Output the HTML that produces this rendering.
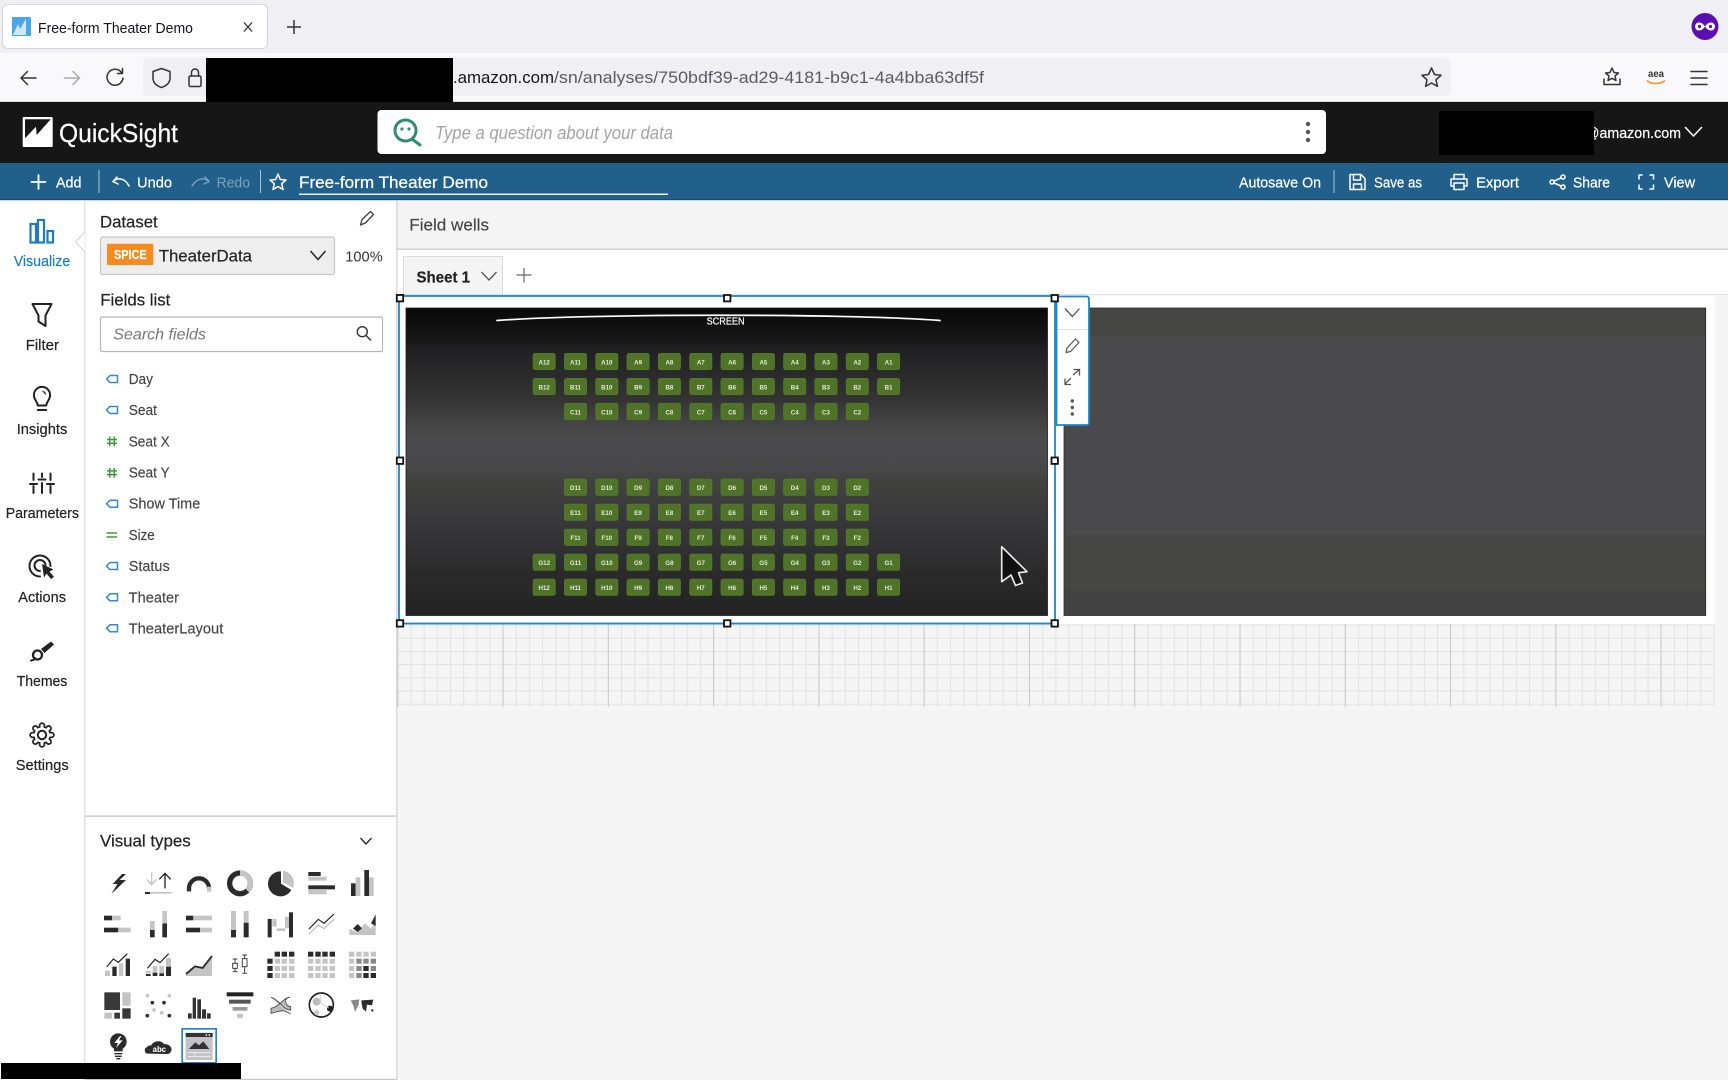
<!DOCTYPE html>
<html><head><meta charset="utf-8"><title>Free-form Theater Demo</title>
<style>
html,body{margin:0;padding:0;background:#f5f5f5;width:1728px;height:1080px;overflow:hidden}
svg{display:block;font-family:"Liberation Sans",sans-serif}
text[fill="#fff"]{stroke:#fff;stroke-width:.22}
text[fill="#222"]{stroke:#222;stroke-width:.2}
.fl text{stroke:#444;stroke-width:.15}
.s{width:22.4px;height:16.5px;fill:#4f7428;stroke:#5a802f;stroke-width:.5}
.l{font-size:6.2px;fill:#e4ead6;text-anchor:middle;font-weight:bold}
.w{fill:none;stroke:#fff;stroke-width:1.5;stroke-linecap:round;stroke-linejoin:round}
.k{fill:none;stroke:#222;stroke-width:2;stroke-linecap:round;stroke-linejoin:round}
.b{fill:none;stroke:#444;stroke-width:1.4;stroke-linecap:round;stroke-linejoin:round}
.t{fill:none;stroke:#2f8ad2;stroke-width:1.5;stroke-linejoin:round}
.n{fill:none;stroke:#3a9a3a;stroke-width:1.5}
.h{fill:#fff;stroke:#111;stroke-width:1.8}
.d{fill:#2b2b2b}.g{fill:#c4c4c4}.m{fill:#888}
.q{width:16px;height:15px}
</style></head><body>
<svg width="1728" height="1080" viewBox="0 0 1728 1080" xmlns="http://www.w3.org/2000/svg">
<defs>
<pattern id="gm" x="397.3" y="624.5" width="13.16" height="13.2" patternUnits="userSpaceOnUse"><path d="M.6 0V13.2M0 .6H13.16" stroke="#e3e3e5" stroke-width="1.1" fill="none"/></pattern>
<linearGradient id="th" x1="0" y1="0" x2="0" y2="1"><stop offset="0" stop-color="#090909"/><stop offset=".1" stop-color="#161616"/><stop offset=".136" stop-color="#202022"/><stop offset=".3" stop-color="#343434"/><stop offset=".386" stop-color="#464646"/><stop offset=".43" stop-color="#4b4b4d"/><stop offset=".526" stop-color="#474749"/><stop offset=".558" stop-color="#424240"/><stop offset=".688" stop-color="#38383a"/><stop offset=".883" stop-color="#29292a"/><stop offset="1" stop-color="#232324"/></linearGradient>
</defs>

<!-- browser chrome -->
<rect width="1728" height="53" fill="#f0f0f4"/>
<rect x="2.5" y="4.5" width="265" height="44" rx="5" fill="#fff" stroke="#d4d4d8"/>
<rect x="12" y="17" width="19" height="19" rx="1" fill="#4aa6e8"/>
<path d="M13 35L18 24L20 29L26 19V35Z" fill="#cfe8fb"/>
<text x="38" y="33" font-size="14.5" fill="#15141a" textLength="155" lengthAdjust="spacingAndGlyphs">Free-form Theater Demo</text>
<path d="M244 22.5L252 31.5M252 22.5L244 31.5" stroke="#333" stroke-width="1.3" fill="none"/>
<path d="M294 20V34M287 27H301" stroke="#333" stroke-width="1.5" fill="none"/>
<circle cx="1705" cy="26.5" r="13.5" fill="#5b0fb0"/>
<path d="M1705 26.5c-2-3-4-4-6-4a4 4 0 0 0 0 8c2 0 4-1 6-4c2 3 4 4 6 4a4 4 0 0 0 0-8c-2 0-4 1-6 4Z" fill="#fff"/>
<circle cx="1699.5" cy="26.5" r="1.6" fill="#5b0fb0"/><circle cx="1710.5" cy="26.5" r="1.6" fill="#5b0fb0"/>

<rect y="53" width="1728" height="49" fill="#f9f9fb"/>
<rect y="101" width="1728" height="1" fill="#ddd"/>
<rect x="143" y="58" width="1308" height="38" rx="5" fill="#f0f0f4"/>
<g fill="none" stroke="#333" stroke-width="1.5" stroke-linecap="round" stroke-linejoin="round">
<path d="M36 78H21M27.5 71.5L21 78L27.5 84.5"/>
<path d="M64.5 78H79.5M73 71.5L79.5 78L73 84.5" stroke="#aaa"/>
<path d="M121.5 72.5A8 8 0 1 0 123 78M122.5 68.5V73.5H117.5"/>
<path d="M161.5 68.5L170 71.5V78C170 83 166 86 161.5 87.5C157 86 153 83 153 78V71.5Z"/>
<rect x="189" y="76" width="12" height="10.5" rx="1.5"/><path d="M191.5 76V72.5A3.5 3.5 0 0 1 198.5 72.5V76"/>
<path d="M1431.5 68L1434.5 74.5L1441 75.3L1436 79.8L1437.4 86.3L1431.5 83L1425.6 86.3L1427 79.8L1422 75.3L1428.5 74.5Z"/>
<path d="M1612 68L1614 72.5L1618.5 73L1615 76L1616 80.5L1612 78.3L1608 80.5L1609 76L1605.5 73L1610 72.5ZM1604 79V84.5H1620V79"/>
<path d="M1691 71.5H1707M1691 78H1707M1691 84.5H1707"/>
</g>
<text x="1656" y="77" font-size="10" font-weight="bold" fill="#333" text-anchor="middle" textLength="16" lengthAdjust="spacingAndGlyphs">aea</text>
<path d="M1647 80.5C1651 84.5 1660 84.5 1665 80.5" stroke="#f09a28" stroke-width="1.6" fill="none"/>
<text x="453" y="83" font-size="16.5" fill="#15141a" textLength="101" lengthAdjust="spacingAndGlyphs">.amazon.com</text>
<text x="554" y="83" font-size="16.5" fill="#5b5b66" textLength="430" lengthAdjust="spacingAndGlyphs">/sn/analyses/750bdf39-ad29-4181-b9c1-4a4bba63df5f</text>
<rect x="206" y="58" width="247" height="44" fill="#000"/>

<!-- QuickSight header -->
<rect y="102" width="1728" height="61" fill="#161616"/>
<rect x="22.7" y="117" width="30" height="30" rx="1" fill="#fff"/>
<path d="M25 119.3H50.7L36.7 135L36 126.700L25 138.300Z" fill="#161616"/>
<text x="59" y="142" font-size="26" fill="#fff" textLength="119" lengthAdjust="spacingAndGlyphs">QuickSight</text>
<rect x="377.5" y="110" width="948.5" height="44" rx="4" fill="#fff"/>
<circle cx="405.5" cy="130.5" r="10.5" fill="none" stroke="#2e8b74" stroke-width="3"/>
<path d="M412 139L420 145" stroke="#2e8b74" stroke-width="3" stroke-linecap="round"/>
<circle cx="402" cy="129" r="1.6" fill="#2e8b74"/><circle cx="409" cy="129" r="1.6" fill="#2e8b74"/>
<text x="435" y="139" font-size="18" font-style="italic" fill="#a4a4a4" textLength="238" lengthAdjust="spacingAndGlyphs">Type a question about your data</text>
<circle cx="1308" cy="124" r="2.2" fill="#555"/><circle cx="1308" cy="132" r="2.2" fill="#555"/><circle cx="1308" cy="140" r="2.2" fill="#555"/>
<text x="1585" y="138" font-size="15" fill="#fff" textLength="96" lengthAdjust="spacingAndGlyphs">@amazon.com</text>
<rect x="1439" y="111" width="155" height="44" fill="#000"/>
<path d="M1685.500 127.500L1693.500 136L1701.500 127.500" class="w"/>

<!-- blue action bar -->
<rect y="163" width="1728" height="37" fill="#22608c"/>
<rect y="199" width="1728" height="1" fill="#134e78"/>
<rect y="200" width="1728" height="1" fill="#c8d6e4"/>
<path d="M38.500 175V189M31.500 182H45.500" class="w" style="stroke-width:1.800"/>
<text x="56" y="187.500" font-size="15" fill="#fff" textLength="25.500" lengthAdjust="spacingAndGlyphs">Add</text>
<rect x="98.500" y="170" width="1" height="23" fill="#a8c0d2"/>
<path d="M113 181.500L117 177M113 181.500L118 184M113.500 181C118 177.500 125 178 129 186" class="w"/>
<text x="137" y="187.500" font-size="15" fill="#fff" textLength="35" lengthAdjust="spacingAndGlyphs">Undo</text>
<path d="M209 181.500L205 177M209 181.500L204 184M208.500 181C204 177.500 197 178 192 186" fill="none" stroke="#7d9fb8" stroke-width="1.500" stroke-linecap="round"/>
<text x="216.500" y="187.500" font-size="15" fill="#7d9fb8" textLength="33.500" lengthAdjust="spacingAndGlyphs">Redo</text>
<rect x="260" y="170" width="1" height="23" fill="#a8c0d2"/>
<path d="M278 174L280.300 179.500L286 180L281.700 183.700L283 189.500L278 186.500L273 189.500L274.300 183.700L270 180L275.700 179.500Z" class="w"/>
<text x="299" y="188" font-size="16.500" fill="#fff" textLength="189" lengthAdjust="spacingAndGlyphs">Free-form Theater Demo</text>
<rect x="299" y="193.500" width="369" height="1.500" fill="#e8eff5"/>
<text x="1239" y="187.500" font-size="15" fill="#fff" textLength="82" lengthAdjust="spacingAndGlyphs">Autosave On</text>
<rect x="1333.500" y="170" width="1" height="23" fill="#a8c0d2"/>
<path d="M1350 174.500H1361L1365 178.500V189.500H1350ZM1353.500 174.500V180H1360.500V174.500M1353.500 189.500V184H1361.500V189.500" class="w"/>
<text x="1374" y="187.500" font-size="15" fill="#fff" textLength="48" lengthAdjust="spacingAndGlyphs">Save as</text>
<path d="M1454 179V174.500H1464V179M1454 186H1451V179H1467V186H1464M1454 183H1464V189.500H1454Z" class="w"/>
<text x="1476" y="187.500" font-size="15" fill="#fff" textLength="43" lengthAdjust="spacingAndGlyphs">Export</text>
<circle cx="1563" cy="177" r="2" class="w"/><circle cx="1563" cy="187" r="2" class="w"/><circle cx="1552" cy="182" r="2" class="w"/><path d="M1554 181L1561 178M1554 183L1561 186" class="w"/>
<text x="1573" y="187.500" font-size="15" fill="#fff" textLength="37" lengthAdjust="spacingAndGlyphs">Share</text>
<path d="M1642 175H1639V179M1650 175H1653.500V179M1639 185V189H1642M1653.500 185V189H1650" class="w"/>
<text x="1664" y="187.500" font-size="15" fill="#fff" textLength="31" lengthAdjust="spacingAndGlyphs">View</text>

<!-- main backgrounds -->
<rect x="0" y="201" width="396" height="879" fill="#fff"/>
<rect x="84.300" y="201" width="1" height="879" fill="#d2d2d2"/>
<rect x="396.300" y="201" width="1.200" height="879" fill="#d2d2d2"/>
<rect x="397.500" y="201" width="1331" height="48" fill="#f4f4f4"/>
<rect x="397.500" y="248.500" width="1331" height="1.500" fill="#cfcfcf"/>
<rect x="397.500" y="250" width="1331" height="45" fill="#fff"/>
<rect x="397.500" y="294" width="1331" height="1" fill="#e0e0e0"/>
<rect x="85.300" y="815.500" width="311" height="1.200" fill="#bdbdbd"/>
<rect x="85.300" y="1078.800" width="312" height="1.200" fill="#c8c8c8"/>

<!-- left nav -->
<path d="M84.800 232L75.500 241.800L84.800 252" fill="#fff" stroke="#d2d2d2"/>
<g fill="none" stroke="#1b7dc2" stroke-width="2.200">
<rect x="30.500" y="224" width="5.500" height="18.500"/><rect x="38" y="220" width="6" height="22.500"/><rect x="47.500" y="231" width="5.500" height="11.500"/>
</g>
<text x="13.700" y="266" font-size="15" fill="#1b7dc2" stroke="#1b7dc2" stroke-width=".2" textLength="56.600" lengthAdjust="spacingAndGlyphs">Visualize</text>
<path d="M32.500 304H51.500L45.500 315.500V326L38.500 321.500V315.500Z" class="k"/>
<text x="25.700" y="350" font-size="15" fill="#222" textLength="33.300" lengthAdjust="spacingAndGlyphs">Filter</text>
<path d="M37.800 405.500C37.500 401.500 33.900 400 33.900 395A8.100 8.100 0 0 1 50.100 395C50.100 400 46.500 401.500 46.200 405.500Z" class="k"/>
<path d="M37.800 410H46.200" class="k"/><path d="M42.500 391.500A3.500 3.500 0 0 1 45.500 394.500" fill="none" stroke="#222" stroke-width="1.200"/>
<text x="16.700" y="434" font-size="15" fill="#222" textLength="50.600" lengthAdjust="spacingAndGlyphs">Insights</text>
<path d="M33.500 473.500V480M33.500 486V493M42 473.500V477M42 483V493M50.500 473.500V480M50.500 486V493" class="k"/>
<path d="M30 484H37M38.500 479.500H45.500M47 484H54" class="k"/>
<text x="5.700" y="518" font-size="15" fill="#222" textLength="73.300" lengthAdjust="spacingAndGlyphs">Parameters</text>
<path d="M40 576.500A10.500 10.500 0 1 1 50.500 566" class="k"/>
<path d="M40 571A5.500 5.500 0 1 1 45.500 565.500" class="k"/>
<path d="M42 564L53.500 569.500L49.500 571.500L54 577L51 579L46.500 573.500L44 577.500Z" fill="#222"/>
<text x="18.300" y="602" font-size="15" fill="#222" textLength="47.700" lengthAdjust="spacingAndGlyphs">Actions</text>
<path d="M41 649L51 641.500L54 644.500L44.500 653Z" fill="#222"/>
<circle cx="37.500" cy="655" r="4.500" fill="none" stroke="#222" stroke-width="2.300"/>
<path d="M31 660.500C34 660 35 659 35 658" class="k"/>
<text x="16.700" y="686" font-size="15" fill="#222" textLength="50.600" lengthAdjust="spacingAndGlyphs">Themes</text>
<g transform="translate(42 735)">
<g stroke="#222" stroke-width="6.500" stroke-linecap="round"><path d="M-9.500 0H9.500M0 -9.500V9.500M-6.700 -6.700L6.700 6.700M-6.700 6.700L6.700 -6.700"/></g>
<circle r="9" fill="#222"/>
<g stroke="#fff" stroke-width="3" stroke-linecap="round"><path d="M-9.500 0H9.500M0 -9.500V9.500M-6.700 -6.700L6.700 6.700M-6.700 6.700L6.700 -6.700"/></g>
<circle r="7.500" fill="#fff"/><circle r="4.200" fill="#fff" stroke="#222" stroke-width="2"/>
</g>
<text x="15.700" y="770" font-size="15" fill="#222" textLength="53" lengthAdjust="spacingAndGlyphs">Settings</text>

<!-- dataset panel -->
<text x="100" y="227.500" font-size="16.500" fill="#222" textLength="57.700" lengthAdjust="spacingAndGlyphs">Dataset</text>
<path d="M360.500 225L362 219.500L370.500 211.500L373.500 214.500L365.500 222.800Z" class="b"/>
<rect x="100.500" y="237" width="234" height="37.500" rx="2" fill="#eeeeee" stroke="#c6c6c6" stroke-width="1.200"/>
<rect x="107" y="243.700" width="46.300" height="21.300" rx="1" fill="#f58a1f"/>
<text x="114" y="259" font-size="13" font-weight="bold" fill="#fff" textLength="32.700" lengthAdjust="spacingAndGlyphs">SPICE</text>
<text x="158.700" y="261.700" font-size="17" fill="#222" textLength="93.300" lengthAdjust="spacingAndGlyphs">TheaterData</text>
<path d="M310.500 251L318 259.500L325.500 251" fill="none" stroke="#222" stroke-width="1.500"/>
<text x="345.300" y="261.500" font-size="15" fill="#333" textLength="37.400" lengthAdjust="spacingAndGlyphs">100%</text>
<text x="100.300" y="305.500" font-size="16.500" fill="#222" textLength="70" lengthAdjust="spacingAndGlyphs">Fields list</text>
<rect x="100.500" y="317" width="282" height="34.500" rx="1.500" fill="#fff" stroke="#b4b8be" stroke-width="1.200"/>
<text x="113.300" y="339.500" font-size="16" font-style="italic" fill="#777" textLength="92.700" lengthAdjust="spacingAndGlyphs">Search fields</text>
<circle cx="362.300" cy="331.700" r="5" fill="none" stroke="#333" stroke-width="1.400"/>
<path d="M366 335.500L371 340.500" stroke="#333" stroke-width="1.400"/>

<g class="t">
<path d="M117.500 375.500H110L106.500 379L110 382.500H117.500Z"/>
<path d="M117.500 406.500H110L106.500 410L110 413.500H117.500Z"/>
<path d="M117.500 500.200H110L106.500 503.700L110 507.200H117.500Z"/>
<path d="M117.500 562.500H110L106.500 566L110 569.500H117.500Z"/>
<path d="M117.500 593.800H110L106.500 597.300L110 600.800H117.500Z"/>
<path d="M117.500 624.800H110L106.500 628.300L110 631.800H117.500Z"/>
</g>
<g class="n">
<path d="M109.700 436.500V446.200M114.300 436.500V446.200M107 439.500H117M107 443.200H117"/>
<path d="M109.700 467.900V477.600M114.300 467.900V477.600M107 470.900H117M107 474.600H117"/>
<path d="M106.500 533H117M106.500 537H117"/>
</g>
<g class="fl" font-size="14.500" fill="#444">
<text x="128.700" y="384" textLength="24.300" lengthAdjust="spacingAndGlyphs">Day</text>
<text x="128.700" y="415" textLength="28.300" lengthAdjust="spacingAndGlyphs">Seat</text>
<text x="128.700" y="446.300" textLength="41" lengthAdjust="spacingAndGlyphs">Seat X</text>
<text x="128.700" y="477.700" textLength="41" lengthAdjust="spacingAndGlyphs">Seat Y</text>
<text x="128.700" y="508.700" textLength="71.600" lengthAdjust="spacingAndGlyphs">Show Time</text>
<text x="128.700" y="540" textLength="26" lengthAdjust="spacingAndGlyphs">Size</text>
<text x="128.700" y="571" textLength="41" lengthAdjust="spacingAndGlyphs">Status</text>
<text x="128.700" y="602.300" textLength="50.300" lengthAdjust="spacingAndGlyphs">Theater</text>
<text x="128.700" y="633.300" textLength="94.600" lengthAdjust="spacingAndGlyphs">TheaterLayout</text>
</g>

<!-- visual types -->
<text x="100" y="846.500" font-size="16.500" fill="#222" textLength="90.700" lengthAdjust="spacingAndGlyphs">Visual types</text>
<path d="M360.500 838L366 844L371.500 838" fill="none" stroke="#222" stroke-width="1.300"/>
<g transform="translate(90 860) scale(.33333)">
<path class="d" d="M96 42L68 72H82L64 102L108 60H89L108 42Z"/>
<path d="M185 37V74M170 58L185 74L200 58" fill="none" stroke="#c4c4c4" stroke-width="4"/>
<path d="M225 40V85M208 58L225 40L242 58" fill="none" stroke="#222" stroke-width="4"/>
<rect class="g" x="165" y="96" width="80" height="5"/><rect class="d" x="165" y="96" width="15" height="6"/>
<path d="M297 94V85A30 30 0 0 1 357 85" fill="none" stroke="#2b2b2b" stroke-width="13"/><rect class="g" x="351" y="80" width="13" height="15"/>
<circle cx="450" cy="70" r="31" fill="none" stroke="#2b2b2b" stroke-width="16"/>
<path d="M450 39A31 31 0 0 1 472 92" fill="none" stroke="#c4c4c4" stroke-width="16"/>
<path class="d" d="M573 34A37.500 37.500 0 1 0 604 90L573 71Z"/><path class="g" d="M579 32A38 38 0 0 1 609 84L579 66Z"/>
<rect class="d" x="655" y="36" width="37" height="12"/><rect class="g" x="655" y="50" width="55" height="12"/><rect class="d" x="655" y="76" width="80" height="12"/><rect class="g" x="655" y="90" width="55" height="13"/>
<rect class="d" x="783" y="70" width="14" height="38"/><rect class="g" x="797" y="52" width="14" height="56"/><rect class="d" x="823" y="30" width="14" height="78"/><rect class="g" x="837" y="52" width="14" height="56"/>

<rect class="d" x="42" y="167" width="24" height="14"/><rect class="g" x="66" y="167" width="26" height="14"/><rect class="d" x="42" y="203" width="43" height="14"/><rect class="g" x="85" y="203" width="37" height="14"/>
<rect class="d" x="180" y="210" width="14" height="22"/><rect class="g" x="180" y="183" width="14" height="27"/><rect class="d" x="217" y="190" width="14" height="42"/><rect class="g" x="217" y="153" width="14" height="37"/>
<rect class="d" x="288" y="167" width="22" height="14"/><rect class="g" x="310" y="167" width="56" height="14"/><rect class="d" x="288" y="203" width="42" height="14"/><rect class="g" x="330" y="203" width="36" height="14"/>
<rect class="d" x="423" y="210" width="15" height="22"/><rect class="g" x="423" y="153" width="15" height="57"/><rect class="d" x="461" y="188" width="15" height="44"/><rect class="g" x="461" y="153" width="15" height="35"/>
<rect class="d" x="533" y="177" width="12" height="55"/><rect class="g" x="547" y="177" width="13" height="23"/><rect class="g" x="560" y="205" width="25" height="8"/><rect class="g" x="585" y="170" width="12" height="35"/><rect class="d" x="597" y="157" width="12" height="75"/>
<path d="M657 207L685 178L702 190L732 162" fill="none" stroke="#222" stroke-width="3.500"/><path d="M657 222L685 195L702 206L732 178" fill="none" stroke="#bbb" stroke-width="3.500"/>
<path class="g" d="M778 225V206L800 216L825 190L843 206L857 186V225Z"/><path class="d" d="M789 206L803 192L816 205L803 216ZM843 190L857 163V198Z"/>

<rect class="g" x="45" y="332" width="15" height="16"/><rect class="d" x="67" y="320" width="13" height="28"/><rect class="g" x="87" y="310" width="13" height="38"/><rect class="d" x="107" y="296" width="13" height="52"/><path d="M50 321L70 297L85 307L112 281" fill="none" stroke="#222" stroke-width="3.500"/>
<rect class="g" x="168" y="332" width="14" height="8"/><rect class="d" x="168" y="342" width="14" height="6"/><rect class="g" x="188" y="318" width="14" height="19"/><rect class="d" x="188" y="338" width="14" height="10"/><rect class="g" x="208" y="318" width="14" height="22"/><rect class="d" x="208" y="340" width="14" height="8"/><rect class="g" x="228" y="294" width="15" height="26"/><rect class="d" x="228" y="320" width="15" height="28"/><path d="M172 325L195 298L210 308L236 281" fill="none" stroke="#222" stroke-width="3.500"/>
<path class="g" d="M288 348V338L316 318L340 324L366 290V348Z"/><path d="M288 342L315 319L338 324L366 288" fill="none" stroke="#2b2b2b" stroke-width="5.500"/>
<g fill="none" stroke="#333" stroke-width="2.800"><rect x="428" y="310" width="14" height="15"/><path d="M435 297V310M435 325V335M428 297H442M428 335H442"/><rect x="457" y="296" width="14" height="24"/><path d="M464 285V296M464 320V340M457 285H471M457 340H471"/></g>

<g class="g"><rect class="q" x="554" y="296"/><rect class="q" x="575" y="296"/><rect class="q" x="597" y="296"/><rect class="q" x="554" y="318"/><rect class="q" x="575" y="318"/><rect class="q" x="597" y="318"/><rect class="q" x="554" y="339"/><rect class="q" x="575" y="339"/><rect class="q" x="597" y="339"/></g>
<g class="d"><rect class="q" x="554" y="275"/><rect class="q" x="575" y="275"/><rect class="q" x="597" y="275"/><rect class="q" x="532" y="296"/><rect class="q" x="532" y="318"/><rect class="q" x="532" y="339"/></g>
<g class="d"><rect class="q" x="654" y="275"/><rect class="q" x="676" y="275"/><rect class="q" x="697" y="275"/><rect class="q" x="719" y="275"/></g>
<g class="g"><rect class="q" x="654" y="296"/><rect class="q" x="676" y="296"/><rect class="q" x="697" y="296"/><rect class="q" x="719" y="296"/><rect class="q" x="654" y="318"/><rect class="q" x="676" y="318"/><rect class="q" x="697" y="318"/><rect class="q" x="719" y="318"/><rect class="q" x="654" y="339"/><rect class="q" x="676" y="339"/><rect class="q" x="697" y="339"/><rect class="q" x="719" y="339"/></g>
<g class="g"><rect class="q" x="777" y="275"/><rect class="q" x="799" y="275"/><rect class="q" x="820" y="275"/><rect class="q" x="842" y="275"/><rect class="q" x="777" y="296"/><rect class="q" x="777" y="318"/><rect class="q" x="777" y="339"/></g>
<g class="m"><rect class="q" x="799" y="296"/><rect class="q" x="820" y="296"/><rect class="q" x="842" y="296"/><rect class="q" x="799" y="318"/><rect class="q" x="842" y="318"/><rect class="q" x="799" y="339"/></g>
<g class="d"><rect class="q" x="820" y="318"/><rect class="q" x="820" y="339"/><rect class="q" x="842" y="339"/></g>

<rect x="43" y="397" width="47" height="53" fill="#383838"/><rect class="g" x="97" y="397" width="25" height="40"/><rect x="97" y="445" width="25" height="31" fill="#383838"/><rect x="73" y="458" width="17" height="18" fill="#383838"/><rect class="g" x="43" y="458" width="23" height="18"/>
<g class="g"><circle cx="172" cy="407" r="5.500"/><circle cx="238" cy="407" r="5.500"/><circle cx="192" cy="450" r="5.500"/><circle cx="215" cy="458" r="5.500"/></g>
<g class="d"><circle cx="187" cy="428" r="5.500"/><circle cx="222" cy="428" r="5.500"/><circle cx="172" cy="467" r="5.500"/><circle cx="238" cy="467" r="5.500"/></g>
<g fill="#333"><rect x="294" y="460" width="11" height="16"/><rect x="308" y="413" width="10" height="63"/><rect x="322" y="418" width="11" height="58"/><rect x="336" y="448" width="12" height="28"/><rect x="351" y="460" width="11" height="16"/></g>
<rect x="410" y="397" width="80" height="12" fill="#222"/><rect x="417" y="419" width="65" height="12" fill="#555"/><rect x="428" y="441" width="44" height="11" fill="#999"/><rect class="g" x="441" y="462" width="18" height="12"/>
<path d="M543 412C570 420 578 450 602 450V440C585 440 580 412 600 412C580 412 570 440 543 445V460C570 455 575 445 602 462" fill="#bbb" stroke="#444" stroke-width="2.500"/>
<circle cx="694" cy="435" r="36" fill="#fff" stroke="#222" stroke-width="5"/><circle cx="680" cy="425" r="12" fill="#bbb"/><circle cx="680" cy="458" r="8" fill="#ccc"/><circle cx="720" cy="446" r="9" fill="#222"/><path d="M685 425L716 444M690 400L692 425" stroke="#ccc" stroke-width="2.500" fill="none"/>
<path d="M782 421L808 418L806 434L795 456L790 436Z" fill="#888"/><path d="M814 421L850 419L846 436L831 434L828 455L818 446L815 432Z" fill="#2b2b2b"/><circle cx="847" cy="451" r="3.500" fill="#2b2b2b"/>

<circle cx="85" cy="545" r="25" fill="#2b2b2b"/><path d="M72 562H98V574H72Z" fill="#2b2b2b"/><path d="M73 581H97M75 589H95M79 596H91" stroke="#2b2b2b" stroke-width="4" fill="none"/>
<path d="M90 528L73 549H84L78 564L98 541H87L94 528Z" fill="#fff"/>
<path class="d" d="M175 581A10 10 0 0 1 170 562C172 558 178 556 184 556C188 544 212 538 222 552C240 552 250 566 242 576C240 580 236 582 232 582Z"/>
<text x="188" y="576" font-size="24" font-weight="bold" fill="#fff" textLength="40" lengthAdjust="spacingAndGlyphs">abc</text>
<rect x="276.500" y="506.500" width="102" height="102" fill="#fff" stroke="#1d86d2" stroke-width="5"/>
<rect x="287" y="518" width="81" height="82" fill="#c2c2c8"/><rect x="287" y="519" width="81" height="12" fill="#333"/><circle cx="349" cy="525" r="2.500" fill="#fff"/><circle cx="358" cy="525" r="2.500" fill="#fff"/>
<path d="M297 567L316 547L327 556L340 544L358 567Z" fill="#333"/><path d="M293 578H362M293 590H362M315 578V590" stroke="#f4f4f4" stroke-width="2.500"/>
</g>
<rect x="1" y="1063" width="240" height="16" fill="#000"/>

<!-- field wells & sheet -->
<text x="409.300" y="230.500" font-size="17" fill="#444" stroke="#444" stroke-width=".15" textLength="79.700" lengthAdjust="spacingAndGlyphs">Field wells</text>
<rect x="403.500" y="256.500" width="99" height="38" fill="#f4f4f4" stroke="#dcdcdc"/>
<text x="416.500" y="282.500" font-size="16" font-weight="bold" fill="#222" textLength="53.500" lengthAdjust="spacingAndGlyphs">Sheet 1</text>
<path d="M481.500 272L489 280L496.500 272" fill="none" stroke="#555" stroke-width="1.300"/>
<path d="M524 268V282.500M516.500 275H531.500" stroke="#666" stroke-width="1.200" fill="none"/>

<!-- canvas -->
<rect x="397.300" y="624" width="1317.500" height="83" fill="url(#gm)"/>
<g stroke="#cbcbcb" stroke-width="1" fill="none"><path d="M397.800 624V707M503 624V707M608.300 624V707M713.600 624V707M818.900 624V707M924.100 624V707M1029.400 624V707M1134.700 624V707M1240 624V707M1345.200 624V707M1450.500 624V707M1555.800 624V707M1661 624V707"/></g>
<rect x="1055" y="295.500" width="660" height="328.500" fill="#fff"/>
<rect x="399" y="296" width="656" height="327" fill="#fff"/>
<rect x="406" y="308" width="641.500" height="307.500" fill="url(#th)" stroke="#1c1c1c" stroke-width=".8"/>
<rect x="1064" y="308" width="641.700" height="307.500" fill="#4a4a4c"/>
<rect x="1064" y="308" width="641.700" height="28" fill="#464643"/>
<rect x="1064" y="535" width="641.700" height="55" fill="#464644"/>
<rect x="1064" y="590" width="641.700" height="25.500" fill="#434344"/>
<rect x="1064" y="308" width="641.700" height="307.500" fill="none" stroke="#2c2c2c" stroke-width=".8"/>

<path d="M497 320.500C590 313.500 850 313.500 940 320.500" fill="none" stroke="#fff" stroke-width="1.700" stroke-linecap="round"/>
<text x="706.600" y="324.500" font-size="10.500" fill="#fff" textLength="38" lengthAdjust="spacingAndGlyphs">SCREEN</text>

<g transform="translate(0 353.300)"><rect class="s" x="533" rx="2"/><rect class="s" x="564.300" rx="2"/><rect class="s" x="595.600" rx="2"/><rect class="s" x="626.900" rx="2"/><rect class="s" x="658.200" rx="2"/><rect class="s" x="689.600" rx="2"/><rect class="s" x="720.900" rx="2"/><rect class="s" x="752.200" rx="2"/><rect class="s" x="783.500" rx="2"/><rect class="s" x="814.800" rx="2"/><rect class="s" x="846.100" rx="2"/><rect class="s" x="877.400" rx="2"/>
<text class="l" x="544.200" y="11">A12</text><text class="l" x="575.500" y="11">A11</text><text class="l" x="606.800" y="11">A10</text><text class="l" x="638.100" y="11">A9</text><text class="l" x="669.400" y="11">A8</text><text class="l" x="700.800" y="11">A7</text><text class="l" x="732.100" y="11">A6</text><text class="l" x="763.400" y="11">A5</text><text class="l" x="794.700" y="11">A4</text><text class="l" x="826" y="11">A3</text><text class="l" x="857.300" y="11">A2</text><text class="l" x="888.600" y="11">A1</text></g>
<g transform="translate(0 378.300)"><rect class="s" x="533" rx="2"/><rect class="s" x="564.300" rx="2"/><rect class="s" x="595.600" rx="2"/><rect class="s" x="626.900" rx="2"/><rect class="s" x="658.200" rx="2"/><rect class="s" x="689.600" rx="2"/><rect class="s" x="720.900" rx="2"/><rect class="s" x="752.200" rx="2"/><rect class="s" x="783.500" rx="2"/><rect class="s" x="814.800" rx="2"/><rect class="s" x="846.100" rx="2"/><rect class="s" x="877.400" rx="2"/>
<text class="l" x="544.200" y="11">B12</text><text class="l" x="575.500" y="11">B11</text><text class="l" x="606.800" y="11">B10</text><text class="l" x="638.100" y="11">B9</text><text class="l" x="669.400" y="11">B8</text><text class="l" x="700.800" y="11">B7</text><text class="l" x="732.100" y="11">B6</text><text class="l" x="763.400" y="11">B5</text><text class="l" x="794.700" y="11">B4</text><text class="l" x="826" y="11">B3</text><text class="l" x="857.300" y="11">B2</text><text class="l" x="888.600" y="11">B1</text></g>
<g transform="translate(0 403.300)"><rect class="s" x="564.300" rx="2"/><rect class="s" x="595.600" rx="2"/><rect class="s" x="626.900" rx="2"/><rect class="s" x="658.200" rx="2"/><rect class="s" x="689.600" rx="2"/><rect class="s" x="720.900" rx="2"/><rect class="s" x="752.200" rx="2"/><rect class="s" x="783.500" rx="2"/><rect class="s" x="814.800" rx="2"/><rect class="s" x="846.100" rx="2"/>
<text class="l" x="575.500" y="11">C11</text><text class="l" x="606.800" y="11">C10</text><text class="l" x="638.100" y="11">C9</text><text class="l" x="669.400" y="11">C8</text><text class="l" x="700.800" y="11">C7</text><text class="l" x="732.100" y="11">C6</text><text class="l" x="763.400" y="11">C5</text><text class="l" x="794.700" y="11">C4</text><text class="l" x="826" y="11">C3</text><text class="l" x="857.300" y="11">C2</text></g>
<g transform="translate(0 479)"><rect class="s" x="564.300" rx="2"/><rect class="s" x="595.600" rx="2"/><rect class="s" x="626.900" rx="2"/><rect class="s" x="658.200" rx="2"/><rect class="s" x="689.600" rx="2"/><rect class="s" x="720.900" rx="2"/><rect class="s" x="752.200" rx="2"/><rect class="s" x="783.500" rx="2"/><rect class="s" x="814.800" rx="2"/><rect class="s" x="846.100" rx="2"/>
<text class="l" x="575.500" y="11">D11</text><text class="l" x="606.800" y="11">D10</text><text class="l" x="638.100" y="11">D9</text><text class="l" x="669.400" y="11">D8</text><text class="l" x="700.800" y="11">D7</text><text class="l" x="732.100" y="11">D6</text><text class="l" x="763.400" y="11">D5</text><text class="l" x="794.700" y="11">D4</text><text class="l" x="826" y="11">D3</text><text class="l" x="857.300" y="11">D2</text></g>
<g transform="translate(0 504)"><rect class="s" x="564.300" rx="2"/><rect class="s" x="595.600" rx="2"/><rect class="s" x="626.900" rx="2"/><rect class="s" x="658.200" rx="2"/><rect class="s" x="689.600" rx="2"/><rect class="s" x="720.900" rx="2"/><rect class="s" x="752.200" rx="2"/><rect class="s" x="783.500" rx="2"/><rect class="s" x="814.800" rx="2"/><rect class="s" x="846.100" rx="2"/>
<text class="l" x="575.500" y="11">E11</text><text class="l" x="606.800" y="11">E10</text><text class="l" x="638.100" y="11">E9</text><text class="l" x="669.400" y="11">E8</text><text class="l" x="700.800" y="11">E7</text><text class="l" x="732.100" y="11">E6</text><text class="l" x="763.400" y="11">E5</text><text class="l" x="794.700" y="11">E4</text><text class="l" x="826" y="11">E3</text><text class="l" x="857.300" y="11">E2</text></g>
<g transform="translate(0 529)"><rect class="s" x="564.300" rx="2"/><rect class="s" x="595.600" rx="2"/><rect class="s" x="626.900" rx="2"/><rect class="s" x="658.200" rx="2"/><rect class="s" x="689.600" rx="2"/><rect class="s" x="720.900" rx="2"/><rect class="s" x="752.200" rx="2"/><rect class="s" x="783.500" rx="2"/><rect class="s" x="814.800" rx="2"/><rect class="s" x="846.100" rx="2"/>
<text class="l" x="575.500" y="11">F11</text><text class="l" x="606.800" y="11">F10</text><text class="l" x="638.100" y="11">F9</text><text class="l" x="669.400" y="11">F8</text><text class="l" x="700.800" y="11">F7</text><text class="l" x="732.100" y="11">F6</text><text class="l" x="763.400" y="11">F5</text><text class="l" x="794.700" y="11">F4</text><text class="l" x="826" y="11">F3</text><text class="l" x="857.300" y="11">F2</text></g>
<g transform="translate(0 554)"><rect class="s" x="533" rx="2"/><rect class="s" x="564.300" rx="2"/><rect class="s" x="595.600" rx="2"/><rect class="s" x="626.900" rx="2"/><rect class="s" x="658.200" rx="2"/><rect class="s" x="689.600" rx="2"/><rect class="s" x="720.900" rx="2"/><rect class="s" x="752.200" rx="2"/><rect class="s" x="783.500" rx="2"/><rect class="s" x="814.800" rx="2"/><rect class="s" x="846.100" rx="2"/><rect class="s" x="877.400" rx="2"/>
<text class="l" x="544.200" y="11">G12</text><text class="l" x="575.500" y="11">G11</text><text class="l" x="606.800" y="11">G10</text><text class="l" x="638.100" y="11">G9</text><text class="l" x="669.400" y="11">G8</text><text class="l" x="700.800" y="11">G7</text><text class="l" x="732.100" y="11">G6</text><text class="l" x="763.400" y="11">G5</text><text class="l" x="794.700" y="11">G4</text><text class="l" x="826" y="11">G3</text><text class="l" x="857.300" y="11">G2</text><text class="l" x="888.600" y="11">G1</text></g>
<g transform="translate(0 579)"><rect class="s" x="533" rx="2"/><rect class="s" x="564.300" rx="2"/><rect class="s" x="595.600" rx="2"/><rect class="s" x="626.900" rx="2"/><rect class="s" x="658.200" rx="2"/><rect class="s" x="689.600" rx="2"/><rect class="s" x="720.900" rx="2"/><rect class="s" x="752.200" rx="2"/><rect class="s" x="783.500" rx="2"/><rect class="s" x="814.800" rx="2"/><rect class="s" x="846.100" rx="2"/><rect class="s" x="877.400" rx="2"/>
<text class="l" x="544.200" y="11">H12</text><text class="l" x="575.500" y="11">H11</text><text class="l" x="606.800" y="11">H10</text><text class="l" x="638.100" y="11">H9</text><text class="l" x="669.400" y="11">H8</text><text class="l" x="700.800" y="11">H7</text><text class="l" x="732.100" y="11">H6</text><text class="l" x="763.400" y="11">H5</text><text class="l" x="794.700" y="11">H4</text><text class="l" x="826" y="11">H3</text><text class="l" x="857.300" y="11">H2</text><text class="l" x="888.600" y="11">H1</text></g>

<!-- cursor -->
<path d="M1001.700 546.700V581.700L1011 575L1015.500 585.500L1022.500 583L1018.500 572.700L1027 571.700Z" fill="#111" stroke="#eee" stroke-width="1.600" stroke-linejoin="round"/>

<!-- selection -->
<rect x="399" y="296" width="656" height="327.500" fill="none" stroke="#1d86cc" stroke-width="1.800"/>
<path d="M1055 296.500H1086.500Q1089 296.500 1089 299V422.500Q1089 425 1086.500 425H1056.500V296.500" fill="#fff" stroke="#1d86cc" stroke-width="1.800"/>
<rect x="1057.500" y="329" width="30.500" height="1" fill="#ddd"/>
<path d="M1065 308.500L1072.300 316.500L1079.500 308.500" fill="none" stroke="#555" stroke-width="1.300"/>
<path d="M1066 352.500L1067 348L1075.500 339L1079 342.500L1070.500 351.500Z" fill="none" stroke="#555" stroke-width="1.200" stroke-linejoin="round"/>
<path d="M1065 384L1071 378M1065 378.500V384.500H1071M1073 375L1079.500 369.500M1073.500 369.500H1079.500V375.500" fill="none" stroke="#555" stroke-width="1.300"/>
<circle cx="1072.300" cy="401" r="1.700" fill="#555"/><circle cx="1072.300" cy="407.500" r="1.700" fill="#555"/><circle cx="1072.300" cy="414" r="1.700" fill="#555"/>
<rect class="h" x="396.800" y="295" width="6.400" height="6.400"/>
<rect class="h" x="724" y="295" width="6.400" height="6.400"/>
<rect class="h" x="1051.500" y="295" width="6.400" height="6.400"/>
<rect class="h" x="396.800" y="457.500" width="6.400" height="6.400"/>
<rect class="h" x="1051.500" y="457.500" width="6.400" height="6.400"/>
<rect class="h" x="396.800" y="620.200" width="6.400" height="6.400"/>
<rect class="h" x="724" y="620.200" width="6.400" height="6.400"/>
<rect class="h" x="1051.500" y="620.200" width="6.400" height="6.400"/>
</svg>
</body></html>
